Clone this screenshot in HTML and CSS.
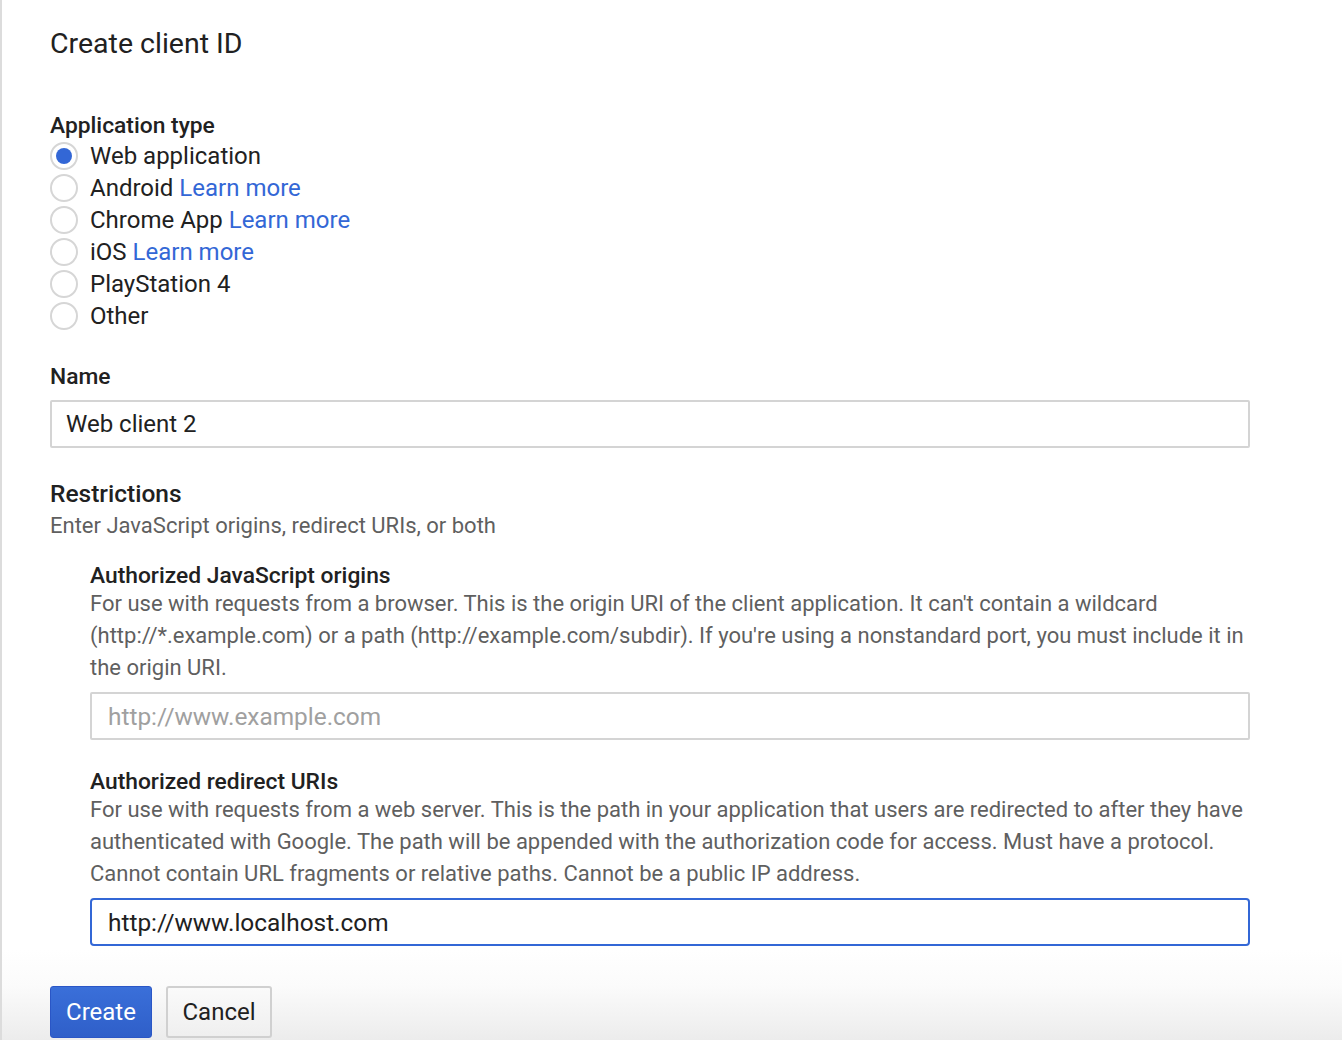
FILE: index.html
```html
<!DOCTYPE html>
<html>
<head>
<meta charset="utf-8">
<link rel="stylesheet" href="styles.css">
</head>
<body>
<div class="page">
  <main class="content">
    <h1 class="title">Create client ID</h1>

    <section class="apptype">
      <div class="label">Application type</div>
      <div class="radios">
        <label class="radio-row"><span class="radio checked"></span><span>Web application</span></label>
        <label class="radio-row"><span class="radio"></span><span>Android <a class="link">Learn more</a></span></label>
        <label class="radio-row"><span class="radio"></span><span>Chrome App <a class="link">Learn more</a></span></label>
        <label class="radio-row"><span class="radio"></span><span>iOS <a class="link">Learn more</a></span></label>
        <label class="radio-row"><span class="radio"></span><span>PlayStation 4</span></label>
        <label class="radio-row"><span class="radio"></span><span>Other</span></label>
      </div>
    </section>

    <section class="name">
      <div class="label">Name</div>
      <div class="input">Web client 2</div>
    </section>

    <section class="restrictions">
      <div class="heading">Restrictions</div>
      <div class="hint">Enter JavaScript origins, redirect URIs, or both</div>

      <div class="sub">
        <div class="label">Authorized JavaScript origins</div>
        <p class="desc">For use with requests from a browser. This is the origin URI of the client application. It can't contain a wildcard (http://*.example.com) or a path (http://example.com/subdir). If you're using a nonstandard port, you must include it in the origin URI.</p>
        <div class="input placeholder">http://www.example.com</div>
      </div>

      <div class="sub">
        <div class="label">Authorized redirect URIs</div>
        <p class="desc">For use with requests from a web server. This is the path in your application that users are redirected to after they have authenticated with Google. The path will be appended with the authorization code for access. Must have a protocol. Cannot contain URL fragments or relative paths. Cannot be a public IP address.</p>
        <div class="input focused">http://www.localhost.com</div>
      </div>
    </section>
  </main>

  <footer class="footer">
    <button class="btn primary">Create</button>
    <button class="btn secondary">Cancel</button>
  </footer>
</div>
</body>
</html>
```

FILE: styles.css
```css
html, body {
  margin: 0;
  padding: 0;
  background: #fff;
}
body {
  font-family: Roboto, "Noto Sans", Arial, sans-serif;
  color: #212121;
  height: 1040px;
  overflow: hidden;
}
.page {
  border-left: 2px solid #dcdcdc;
  height: 1040px;
  box-sizing: border-box;
  display: flex;
  flex-direction: column;
}
.content {
  padding: 0 92px 0 48px;
}
.title {
  font-size: 28.5px;
  font-weight: 400;
  margin: 0;
  padding-top: 28px;
  line-height: 32px;
  color: #212121;
}
.label {
  font-size: 22.8px;
  font-weight: 500;
  line-height: 28px;
  color: #212121;
}
.apptype {
  margin-top: 52px;
}
.radios {
  display: flex;
  flex-direction: column;
}
.radio-row {
  display: flex;
  align-items: center;
  gap: 12px;
  height: 32px;
  font-size: 24px;
  color: #212121;
}
.radio {
  width: 28px;
  height: 28px;
  box-sizing: border-box;
  border: 2px solid #d6d6d6;
  border-radius: 50%;
  display: flex;
  align-items: center;
  justify-content: center;
  flex: none;
}
.radio.checked::after {
  content: "";
  width: 16px;
  height: 16px;
  border-radius: 50%;
  background: #3367d6;
}
.link {
  color: #3367d6;
  text-decoration: none;
}
.name {
  margin-top: 31px;
}
.name .label {
  margin-bottom: 9px;
}
.input {
  height: 48px;
  box-sizing: border-box;
  border: 2px solid #d4d4d4;
  border-radius: 2px;
  padding: 0 14px;
  display: flex;
  align-items: center;
  font-size: 24px;
  color: #212121;
}
.sub .input {
  padding: 0 16px;
  font-size: 24.4px;
}
.input.placeholder {
  color: #a0a0a0;
}
.input.focused {
  border-color: #3367d6;
  border-radius: 4px;
}
.restrictions {
  margin-top: 32px;
}
.heading {
  font-size: 24.5px;
  font-weight: 500;
  line-height: 28px;
}
.hint {
  font-size: 22px;
  color: #5f5f5f;
  line-height: 36px;
}
.sub {
  margin-left: 40px;
  margin-top: 20px;
}
.sub .label {
  line-height: 24px;
}
.sub + .sub {
  margin-top: 30px;
}
.desc {
  margin: 0 0 8px;
  font-size: 22px;
  line-height: 32px;
  color: #5f5f5f;
}
.footer {
  margin-top: 4px;
  padding: 36px 48px 0;
  display: flex;
  gap: 14px;
  background: linear-gradient(to bottom, #ffffff 0%, #fbfbfb 40%, #ececec 100%);
  flex: 1;
  align-items: flex-start;
}
.btn {
  font-family: Roboto, "Noto Sans", Arial, sans-serif;
  font-size: 24px;
  height: 52px;
  box-sizing: border-box;
  border-radius: 3px;
  padding: 0 10px;
  cursor: pointer;
}
.btn.primary {
  background: linear-gradient(to bottom, #3a6fd9, #2f5fc9);
  border: 1px solid #2a56c6;
  color: #fff;
  width: 102px;
}
.btn.secondary {
  background: linear-gradient(to bottom, #fafafa, #efefef);
  border: 2px solid #d0d0d0;
  color: #212121;
  width: 106px;
}
```
